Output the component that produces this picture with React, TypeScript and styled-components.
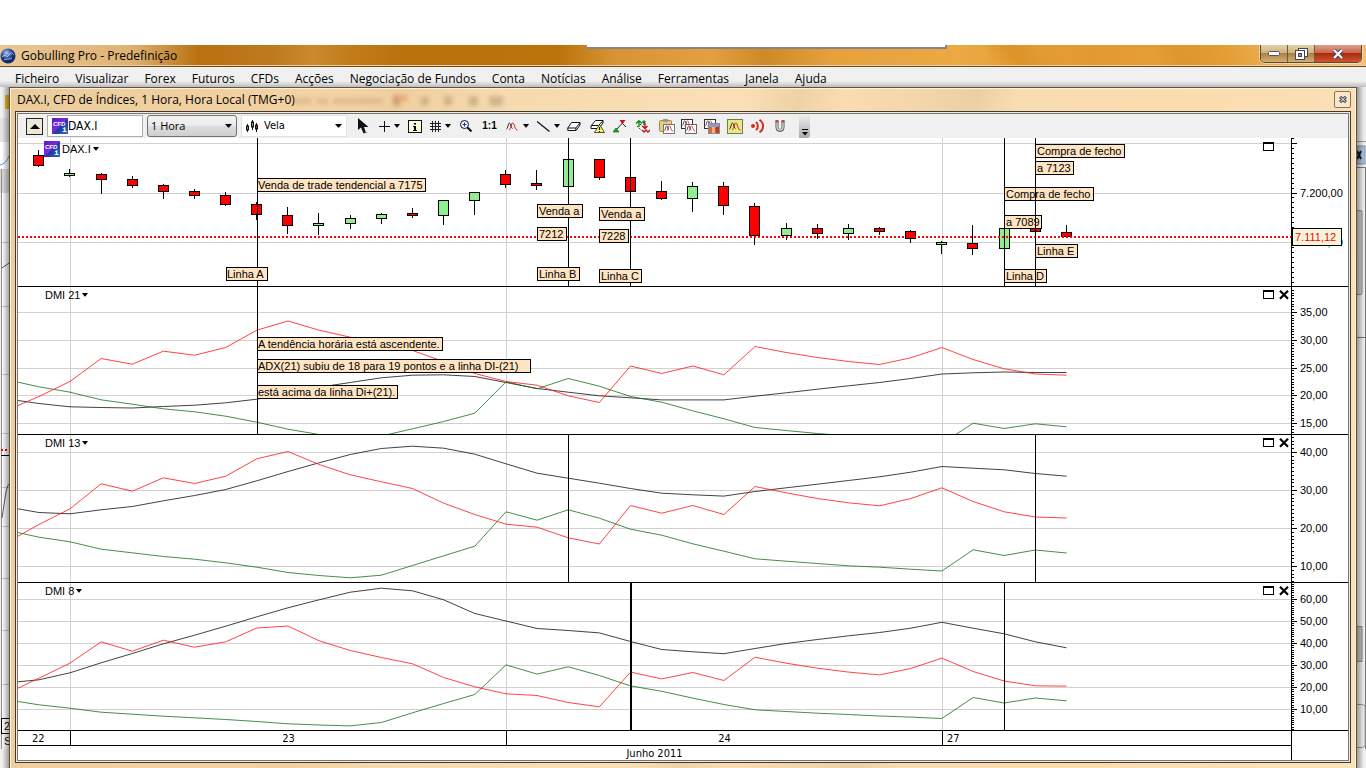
import React from "react";
import styled, { createGlobalStyle, css } from "styled-components";

const ui = `"Open Sans", "Noto Sans", sans-serif`;
const arial = `"Liberation Sans", Arial, sans-serif`;
const tahoma = `"DejaVu Sans Condensed", "DejaVu Sans", sans-serif`;

const GlobalStyle = createGlobalStyle`
  * { box-sizing: border-box; }
  body { margin: 0; background: #fff; overflow: hidden; color: #000; }
  button, input, select { font: inherit; color: inherit; margin: 0; padding: 0; border-radius: 0; }
  svg { display: block; flex: none; }
`;

/* ---------- application shell ---------- */

const Page = styled.div`
  display: flex;
  flex-direction: column;
  min-height: 100vh;
  background: #f0f0f0;
  font: 12px/16px ${ui};
`;

const Desktop = styled.div`
  position: relative;
  height: 45px;
  background: #fff;
`;

const HiddenPanel = styled.div`
  position: absolute;
  left: 43%;
  bottom: -4px;
  width: 360px;
  height: 4px;
  background: #fff;
  border-right: 2px solid #83868c;
  border-bottom: 2px solid #83868c;
  z-index: 2;
`;

const TitleBar = styled.header`
  display: flex;
  align-items: flex-start;
  justify-content: space-between;
  height: 22px;
  border-bottom: 1px solid #6d4c1c;
  box-shadow: inset 0 -1px 0 #f0cf9a;
  background:
    linear-gradient(90deg, rgba(255, 240, 214, 0.6) 0, rgba(255, 236, 204, 0.5) 130px, rgba(255, 230, 190, 0) 200px),
    linear-gradient(60deg, transparent 72%, #dc9328 74%, #e09a30 76%, transparent 78%, transparent 84%, #dc962c 86%, transparent 92%),
    linear-gradient(90deg, #c98a38 0, #b9700f 14%, #bd7a1e 20%, #cb8a2e 23%, #c07a18 26%, #b8720c 30%, #bb740c 41%, #d89434 45%, #e3a040 52%, #cc8a26 56%, #e6a13d 61%, #eba843 70%, #e2992f 80%, #e9a43e 90%, #f0c07a 100%);
`;

const TitleText = styled.h1`
  display: flex;
  align-items: center;
  gap: 5px;
  height: 22px;
  margin: 0;
  font: 12px/22px ${ui};
`;

const WindowButtons = styled.div`
  display: flex;
  height: 18px;
  margin-right: 4px;
  border: 1px solid #5f4a30;
  border-top: 0;
  border-radius: 0 0 5px 5px;
  overflow: hidden;
  box-shadow: 0 0 0 1px rgba(255, 236, 200, 0.6);
`;

const WindowButton = styled.button<{ $close?: boolean }>`
  display: flex;
  align-items: center;
  justify-content: center;
  width: ${(p) => (p.$close ? 46 : 27)}px;
  border: 0;
  border-right: ${(p) => (p.$close ? "0" : "1px solid #6f5a3c")};
  background: ${(p) =>
    p.$close
      ? "linear-gradient(#dea08c 0, #cc6850 45%, #a82c12 50%, #d0522e 100%)"
      : "linear-gradient(#e6cfa6 0, #d2b382 45%, #a9824a 50%, #d4ae72 100%)"};
`;

const MenuBar = styled.nav`
  display: flex;
  gap: 16px;
  height: 20px;
  padding: 0 15px;
  background: linear-gradient(#f0f0f0 70%, #bdbdbd 100%);
`;

const MenuItem = styled.button`
  padding-top: 2px;
  border: 0;
  background: none;
  line-height: 20px;
  white-space: nowrap;
`;

const Workspace = styled.div`
  display: flex;
  flex: 1;
  overflow: hidden;
  height: 681px;
`;

/* ---------- chart window ---------- */

const ChildWindow = styled.section`
  flex: 1;
  min-width: 0;
  display: flex;
  flex-direction: column;
  border: 1px solid #62533f;
  border-bottom: 0;
  padding: 0 5px 5px;
  background: linear-gradient(100deg, #eccb9c 0, #f3d3a4 22%, #f0cf9f 27%, #f6d9ae 33%, #fbdfb6 50%, #eed2a6 54%, #fbdcb0 57%, #ecd0a4 66%, #fadcb2 69%, #fbdcae 80%, #fbe1bc 100%);
  box-shadow: inset 1px 1px 0 #fff0d8, inset -1px 0 0 #fff0d8;
`;

const ChildTitle = styled.div`
  display: flex;
  align-items: center;
  height: 23px;
  padding: 0 0 0 2px;
`;

const ChildName = styled.h2`
  margin: 0;
  font: 12px/22px ${ui};
  white-space: nowrap;
`;

const Ghost = styled.svg`
  margin-left: -8px;
  filter: blur(2px);
  opacity: 0.4;
`;

const ChildClose = styled.button`
  display: flex;
  align-items: center;
  justify-content: center;
  width: 17px;
  height: 17px;
  margin-left: auto;
  border: 1px solid #85735a;
  border-radius: 2px;
  background: #fbe6c8;
`;

const Frame = styled.div`
  border: 1px solid #40382c;
  padding: 1px;
  background: #f6ead6;
`;

const Content = styled.div`
  border: 1px solid #74777a;
  background: #fff;
`;

/* ---------- toolbar ---------- */

const Toolbar = styled.div`
  display: flex;
  align-items: center;
  height: 24px;
  padding-left: 8px;
  background: #f0f0f0;
`;

const CollapseButton = styled.button`
  display: flex;
  align-items: center;
  justify-content: center;
  width: 17px;
  height: 17px;
  margin-right: 4px;
  border: 1px solid #222;
  background: #ece9dc;
`;

const Field = styled.div<{ $w: number; $kind?: "input" | "button" | "flat" }>`
  position: relative;
  display: flex;
  align-items: center;
  width: ${(p) => p.$w}px;
  height: 22px;
  margin-right: 4px;
  padding: 0 4px;
  background: #fff;
  border: 1px solid ${(p) => (p.$kind === "flat" ? "#e1e3ea" : "#abadb3")};
  ${(p) =>
    p.$kind === "button" &&
    css`
      padding: 0 4px 0 3px;
      border-color: #707070;
      border-radius: 3px;
      background: linear-gradient(#f2f2f2 0, #ebebeb 50%, #dddddd 51%, #cfcfcf 100%);
    `}
`;

const SymbolInput = styled.input`
  width: 60px;
  border: 0;
  outline: 0;
  background: none;
  font: 12px/16px ${tahoma};
`;

const Picker = styled.select<{ $font: string; $pad?: number }>`
  flex: 1;
  min-width: 0;
  padding-left: ${(p) => p.$pad ?? 0}px;
  border: 0;
  outline: 0;
  appearance: none;
  background: none;
  font: 11px/16px ${(p) => p.$font};
`;

const Tool = styled.button<{ $w: number }>`
  display: flex;
  align-items: center;
  justify-content: center;
  gap: 4px;
  flex: none;
  width: ${(p) => p.$w}px;
  height: 22px;
  border: 0;
  background: none;
`;

const Ratio = styled.span`
  font: bold 10px/16px ${arial};
`;

const Overflow = styled.button`
  display: flex;
  align-items: flex-end;
  justify-content: center;
  width: 11px;
  height: 24px;
  margin-left: 9px;
  padding-bottom: 2px;
  border: 0;
  border-radius: 0 3px 3px 0;
  background: linear-gradient(#f0f0f0, #a9a9a9);
`;

/* ---------- panes ---------- */

const Pane = styled.section<{ $h: number }>`
  display: flex;
  height: ${(p) => p.$h}px;
  border-bottom: 1px solid #000;
`;

const Plot = styled.div`
  position: relative;
  flex: 1;
  min-width: 0;
  overflow: hidden;
`;

const Scale = styled.div`
  position: relative;
  width: 57px;
  font: 11px/14px ${arial};
`;

const PaneHead = styled.div<{ $first?: boolean }>`
  position: absolute;
  top: ${(p) => (p.$first ? 3 : 0)}px;
  left: ${(p) => (p.$first ? 26 : 27)}px;
  right: ${(p) => (p.$first ? 17 : 2)}px;
  display: flex;
  align-items: center;
  justify-content: space-between;
  height: 16px;
  font: 11px/16px ${arial};
`;

const PaneName = styled.button`
  display: flex;
  align-items: center;
  gap: 2px;
  padding: 0;
  border: 0;
  background: none;
`;

const PaneTools = styled.div<{ $first?: boolean }>`
  display: flex;
  align-self: flex-start;
  gap: 5px;
  padding-top: ${(p) => (p.$first ? 1 : 3)}px;
`;

const PaneTool = styled.button`
  display: flex;
  border: 0;
  background: none;
`;

const Note = styled.span<{ $x: number; $y: number; $w: number; $pad: boolean }>`
  position: absolute;
  left: ${(p) => p.$x}px;
  top: ${(p) => p.$y}px;
  width: ${(p) => p.$w}px;
  height: 14px;
  padding-left: ${(p) => (p.$pad ? 1 : 0)}px;
  border: 1px solid #000;
  background: #ffe4c4;
  font: 11px/12px ${arial};
  white-space: nowrap;
`;

const Marker = styled.span<{ $x: number; $w?: number }>`
  position: absolute;
  left: ${(p) => p.$x}px;
  top: 0;
  bottom: 0;
  width: ${(p) => p.$w ?? 1}px;
  background: #000;
`;

const PriceTag = styled.output`
  position: absolute;
  left: 1px;
  top: 90px;
  width: 50px;
  height: 18px;
  padding-left: 2px;
  border: 1px solid #000;
  background: #f5f5dc;
  color: #f00;
  font: 11px/16px ${arial};
`;

const AxisRow = styled.div`
  display: flex;
  font: 11px/16px ${tahoma};
`;

const Dates = styled.div`
  flex: 1;
  min-width: 0;
`;

const Corner = styled.div`
  width: 57px;
  border-left: 1px solid #000;
`;

const Days = styled.div`
  display: flex;
  height: 15px;
  border-bottom: 1px solid #000;
`;

const Day = styled.div<{ $w?: number; $left?: number }>`
  ${(p) => (p.$w ? css`width: ${p.$w}px; border-right: 1px solid #000;` : css`flex: 1;`)}
  text-align: ${(p) => (p.$left ? "left" : "center")};
  padding-left: ${(p) => p.$left ?? 0}px;
`;

const Month = styled.div`
  height: 14px;
  text-align: center;
`;

/* ---------- data (sheet coordinates) ---------- */

const LEFT = 18;
const xAt = (i: number) => 70 + 31.14 * (i - 1);

// [centre x, body top, body bottom, wick top, wick bottom, rising]
const candles: [number, number, number, number, number, number][] = [
  [38, 155, 166, 150, 167, 0], [69, 173, 176, 169, 177, 1], [101, 174, 180, 173, 194, 0],
  [132, 179, 186, 176, 188, 0], [163, 185, 192, 184, 199, 0], [194, 191, 196, 189, 199, 0],
  [225, 195, 205, 192, 206, 0], [256, 204, 215, 202, 220, 0], [287, 215, 226, 207, 234, 0],
  [318, 223, 226, 213, 235, 1], [350, 218, 224, 215, 229, 1], [381, 214, 219, 213, 224, 1],
  [412, 213, 216, 208, 218, 0], [443, 200, 216, 200, 225, 1], [474, 192, 201, 192, 215, 1],
  [505, 174, 185, 170, 188, 0], [536, 183, 186, 170, 190, 0], [568, 159, 187, 159, 187, 1],
  [599, 159, 178, 159, 180, 0], [630, 177, 192, 177, 192, 0], [661, 191, 199, 181, 200, 0],
  [692, 186, 199, 182, 212, 1], [723, 186, 206, 182, 215, 0], [754, 206, 236, 203, 245, 0],
  [786, 228, 236, 223, 240, 1], [817, 228, 234, 224, 239, 0], [848, 228, 234, 224, 240, 1],
  [879, 228, 232, 227, 235, 0], [910, 231, 239, 230, 243, 0], [941, 242, 245, 241, 254, 1],
  [972, 243, 249, 225, 255, 0], [1004, 228, 249, 228, 249, 1], [1035, 228, 232, 228, 232, 0],
  [1066, 232, 237, 225, 238, 0],
];

type Line = { color: string; start: number; ys: number[] };
type Annotation = [number, number, number, string];
type PaneData = {
  name: string;
  top: number;
  height: number;
  ticks: [number, string][];
  step: number;
  lines: Line[];
  under?: Annotation[];
  markers: [number, number?][];
  notes: Annotation[];
};

const BLACK = "#111";
const RED = "#ff1414";
const GREEN = "#14701c";

const panes: PaneData[] = [
  {
    name: "DAX.I", top: 138, height: 149, step: 4.95,
    ticks: [[143, ""], [193, "7.200,00"], [242, "7.100,00"]],
    lines: [],
    under: [
      [1004, 187, 90, "Compra de fecho"],
      [1004, 215, 38, "a 7089"], [1004, 269, 43, "Linha D"],
    ],
    markers: [[257], [568], [630], [1004], [1035]],
    notes: [
      [257, 178, 169, "Venda de trade tendencial a 7175"], [226, 267, 42, "Linha A"],
      [537, 204, 46, "Venda a"], [537, 227, 30, "7212"], [537, 267, 43, "Linha B"],
      [599, 207, 46, "Venda a"], [599, 229, 30, "7228"], [599, 269, 43, "Linha C"],
      [1035, 144, 90, "Compra de fecho"], [1035, 161, 39, "a 7123"], [1035, 244, 43, "Linha E"],
    ],
  },
  {
    name: "DMI 21", top: 287, height: 148, step: 2.78,
    ticks: [[312, "35,00"], [340, "30,00"], [368, "25,00"], [395, "20,00"], [423, "15,00"]],
    lines: [
      { color: BLACK, start: 400, ys: [403, 406.3, 407, 407.5, 406, 404.7, 402.3, 398.7, 392.7, 386.7, 382, 377.3, 374.7, 374.3, 376, 382, 388, 391.7, 395.3, 397.3, 399.4, 399.4, 399.4, 395.7, 392.3, 388.7, 385.3, 382, 378, 373.5, 372.3, 371.5, 372, 372] },
      { color: GREEN, start: 381.7, ys: [386.3, 391.7, 399.3, 403.7, 408.3, 411.3, 415.7, 421.7, 428.7, 434, 436.5, 435.5, 428.3, 421, 412.7, 381.3, 388.3, 378, 385.7, 396, 401.7, 410.3, 418.3, 427, 430, 433, 435.5, 438, 441, 443, 422.7, 428, 423.3, 426.3] },
      { color: RED, start: 405, ys: [396, 381, 358, 363.7, 350.7, 354.7, 347, 329.7, 320.5, 329.7, 336.7, 342.3, 350, 361, 373, 381, 384.7, 395.3, 402, 365.5, 373, 365.5, 374.3, 346, 352, 357, 361, 364, 357.3, 347, 359, 368.3, 373.5, 374.7] },
    ],
    markers: [[257]],
    notes: [
      [257, 337, 186, "A tendência horária está ascendente."],
      [257, 359, 274, "ADX(21) subiu de 18 para 19 pontos e a linha DI-(21)"],
      [257, 385, 141, "está acima da linha Di+(21)."],
    ],
  },
  {
    name: "DMI 13", top: 435, height: 148, step: 3.8,
    ticks: [[452, "40,00"], [490, "30,00"], [528, "20,00"], [566, "10,00"]],
    lines: [
      { color: BLACK, start: 508.3, ys: [512, 513.3, 509.3, 506, 500.3, 495, 489, 480.3, 471, 462.3, 454, 448, 445.7, 447.7, 453.7, 463.3, 472.7, 477.7, 482.7, 488, 492.7, 494.3, 495.6, 491, 487.3, 483.7, 480, 476.3, 471.7, 466, 467.7, 469.3, 473, 475.7] },
      { color: GREEN, start: 532, ys: [536.7, 541.3, 548.7, 552.3, 556, 558.7, 562.3, 566.7, 572, 575, 577.3, 574.7, 565, 555.3, 545.7, 511.3, 519.7, 509.3, 517.7, 528.7, 534.7, 543.3, 550.7, 558.3, 560.7, 563, 565.3, 566.7, 568.7, 570.5, 549.3, 555, 549.5, 552.5] },
      { color: RED, start: 535.7, ys: [524, 508.3, 483.3, 490.7, 477.3, 483, 475.7, 458.3, 451, 464, 474.3, 481.3, 488, 502.7, 514, 523.7, 526.7, 537.3, 543.5, 505, 512.7, 505, 514, 486, 492.3, 498, 502.3, 505.3, 498, 487.3, 501, 511.3, 516.5, 517.5] },
    ],
    markers: [[568], [1035]],
    notes: [],
  },
  {
    name: "DMI 8", top: 583, height: 148, step: 2.2,
    ticks: [[599, "60,00"], [621, "50,00"], [643, "40,00"], [665, "30,00"], [687, "20,00"], [709, "10,00"]],
    lines: [
      { color: BLACK, start: 681.3, ys: [679.3, 672.3, 662.3, 653, 643.3, 634.7, 625.7, 616.3, 607.3, 599.3, 591.7, 587.7, 590.3, 599.3, 613, 620.5, 628, 630, 632.4, 641, 649, 651.3, 653.2, 648, 643, 639, 635.3, 632, 627.7, 621.8, 627.7, 633.3, 641.3, 647.3] },
      { color: GREEN, start: 701, ys: [704.3, 707.7, 711.7, 713.7, 715.7, 717.3, 719, 721, 723.3, 724.5, 725.4, 722, 712.3, 703, 694, 664.4, 673.6, 666.3, 675, 685.4, 690.8, 697.6, 704, 709.3, 711, 712.7, 714, 715.5, 716.6, 718, 697, 702.5, 697.5, 700.3] },
      { color: RED, start: 687.7, ys: [677.7, 662.7, 641.3, 650.7, 639.7, 646.7, 641.3, 627.5, 625.5, 640.3, 650, 657, 663.3, 677, 686.3, 693.3, 695, 702, 706.3, 671.6, 678.4, 672, 680, 656.7, 662.7, 667.7, 671.6, 674.4, 668, 657.6, 671, 680.5, 685.3, 685.6] },
    ],
    markers: [[630, 2], [1004]],
    notes: [],
  },
];

/* ---------- small drawings ---------- */

const Caret = ({ w = 6 }: { w?: number }) => (
  <svg width={w} height="4" viewBox="0 0 6 4" preserveAspectRatio="none" aria-hidden="true">
    <path d="M0 0h6L3.4 3.5h-.8z" />
  </svg>
);

const CfdIcon = () => (
  <svg width="16" height="16" aria-hidden="true">
    <defs>
      <linearGradient id="cfd" x1="0" y1="0" x2="1" y2="1">
        <stop offset="0" stopColor="#5a1cc0" />
        <stop offset="0.48" stopColor="#7a2be0" />
        <stop offset="0.54" stopColor="#1c3a9c" />
        <stop offset="1" stopColor="#2a6fd0" />
      </linearGradient>
    </defs>
    <rect width="16" height="16" fill="url(#cfd)" />
    <text x="1" y="8" fontFamily="Liberation Sans" fontSize="6" fontWeight="700" fontStyle="italic" fill="#fff">CFD</text>
    <text x="10" y="14" fontFamily="Liberation Mono" fontSize="8" fontWeight="700" fill="#fff">i</text>
  </svg>
);

const Wave = ({ x = 0, y = 0 }: { x?: number; y?: number }) => (
  <g transform={`translate(${x} ${y})`} fill="none" strokeWidth="1">
    <path d="M.5 7C2 6.500 2 1 3.500 1S5 6.500 6.500 6.500" stroke="#222" />
    <path d="M3 8C5 7.500 5 1 6.800 1S8.500 8 11.500 8" stroke="#d81818" />
  </g>
);

const icons: Record<string, React.ReactElement> = {
  cursor: (
    <svg width="12" height="16"><path d="M1 0v12l3-2.500L6.500 15.500l2.500-1L7 9h4.500z" fill="#111" /><path d="M8 13l2 2" stroke="#888" /></svg>
  ),
  cross: <svg width="11" height="11"><path d="M5.500 0v11M0 5.500h11" stroke="#111" /></svg>,
  info: (
    <svg width="14" height="13"><rect x=".5" y=".5" width="13" height="12" fill="#fdfde0" stroke="#111" /><path d="M6 3h2v1.500H6zM5 6h3v4h1v1H5v-1h1V7H5z" /></svg>
  ),
  grid: <svg width="11" height="11"><path d="M2.500 0v11M5.500 0v11M8.500 0v11M0 2.500h11M0 5.500h11M0 8.500h11" stroke="#222" shapeRendering="crispEdges" /></svg>,
  zoom: (
    <svg width="12" height="12"><circle cx="4.500" cy="4.500" r="4" fill="#f4f8ff" stroke="#111" /><path d="M4.500 2.500v4M2.500 4.500h4" stroke="#1830c8" /><path d="M7.500 7.500l4 4" stroke="#111" strokeWidth="2" /></svg>
  ),
  wave: <svg width="13" height="10"><Wave y={1} /></svg>,
  line: <svg width="13" height="11"><path d="M0 .5L12.500 10.500" stroke="#111" strokeWidth="1.300" /></svg>,
  eraser: (
    <svg width="14" height="9"><path d="M4.500 .5h8.500v2.500L9 8.500H.8V6z" fill="#fff" stroke="#111" /><path d="M.8 6h8L13 .8M8.800 6v2.500" fill="none" stroke="#111" /></svg>
  ),
  eraserWarn: (
    <svg width="15" height="13"><path d="M5.500 .5H13v2.500L9 8.500H1V6zM1 5.500h7.500L13 .8" fill="#fff" stroke="#111" /><path d="M9.500 4.500l5 8h-10z" fill="#ffff58" stroke="#222" strokeWidth=".8" /><path d="M9.500 7v3M9.500 11v1" stroke="#111" strokeWidth="1.200" /></svg>
  ),
  swing: (
    <svg width="14" height="13"><path d="M3 10L9.500 3M8.500 2.500L13 7" stroke="#222" fill="none" /><path d="M6.500 0h6L9.500 4z" fill="#d80c0c" /><path d="M0 12h6L3 8z" fill="#18a818" stroke="#0a5c0a" strokeWidth=".6" /></svg>
  ),
  trades: (
    <svg width="14" height="13" fill="none">
      <path d="M3 7V1M0 3.500L3 .8 6 3.500M8 5V1.500M6.500 2.500L8 1l1.500 1.500" stroke="#118811" strokeWidth="1.400" />
      <path d="M9 3v5M6.500 6L9 8.500 11.500 6M6 10l2 2 2-2 2 2 2-2" stroke="#c01818" strokeWidth="1.400" />
      <path d="M1 6l4 4M4 4l3 3" stroke="#333" strokeDasharray="1.500 1" />
    </svg>
  ),
  paste: (
    <svg width="16" height="15"><rect x=".5" y="1.500" width="12" height="11" rx="1" fill="#e8cc80" stroke="#a8873c" /><rect x="4" y="0" width="5" height="3" fill="#999" /><rect x="4.500" y="5.500" width="11" height="9" fill="#fff" stroke="#777" /><g transform="translate(5 6) scale(.8)"><Wave /></g></svg>
  ),
  copy: (
    <svg width="16" height="15"><rect x=".5" y=".5" width="11" height="9" fill="#fff" stroke="#333" /><g transform="translate(1 1) scale(.8)"><Wave /></g><rect x="4.500" y="5.500" width="11" height="9" fill="#fff" stroke="#666" /><g transform="translate(5 6) scale(.8)"><Wave /></g></svg>
  ),
  image: (
    <svg width="16" height="15"><rect x=".5" y=".5" width="11" height="9" fill="#fff" stroke="#333" /><g transform="translate(1 1) scale(.8)"><Wave /></g><rect x="4.500" y="4.500" width="11" height="10" fill="#e06830" stroke="#7a8ca8" /><path d="M5 5h10v3H5z" fill="#88a0c8" /><path d="M8 8h3v6H8z" fill="#ffb070" /><path d="M11 9l4-2v7h-3z" fill="#c83c1c" /></svg>
  ),
  active: <svg width="16" height="15"><rect x=".5" y=".5" width="15" height="14" fill="#e4ea86" stroke="#77794c" /><Wave x={2} y={3} /></svg>,
  sound: (
    <svg width="14" height="14" fill="none" stroke="#d02c24" strokeWidth="2"><circle cx="2" cy="7" r="2" fill="#d02c24" stroke="none" /><path d="M5 3c2.500 2 2.500 6 0 8" /><path d="M8.500 .8c4.800 3 4.800 9.500 0 12.500" /></svg>
  ),
  magnet: (
    <svg width="10" height="12"><path d="M2 1v6c0 4.500 6 4.500 6 0V1" fill="none" stroke="#555" strokeWidth="3" /><path d="M2 2v5c0 4 6 4 6 0V2" fill="none" stroke="#d4d4d4" strokeWidth="1.400" /><path d="M.5 0h3v2.500h-3zM6.500 0h3v2.500h-3z" fill="#b84a40" /></svg>
  ),
};

const tools: [string, string, number, boolean?][] = [
  ["cursor", "Cursor", 23], ["cross", "Mira", 31, true], ["info", "Informação", 20],
  ["grid", "Grelha", 31, true], ["zoom", "Ampliar", 20], ["ratio", "1:1", 27],
  ["wave", "Indicadores", 29, true], ["line", "Linhas", 32, true], ["eraser", "Apagar", 19],
  ["eraserWarn", "Apagar tudo", 28], ["swing", "Tendência", 18], ["trades", "Transacções", 27],
  ["paste", "Colar", 21], ["copy", "Copiar", 24], ["image", "Imagem", 22],
  ["active", "Gráfico", 23], ["sound", "Alerta", 24], ["magnet", "Íman", 20],
];

const menu = ["Ficheiro", "Visualizar", "Forex", "Futuros", "CFDs", "Acções", "Negociação de Fundos", "Conta", "Notícias", "Análise", "Ferramentas", "Janela", "Ajuda"];

const LeftEdge = () => (
  <svg width="9" height="681" aria-hidden="true">
    <defs>
      <linearGradient id="shadeL"><stop offset="0" stopColor="#000" stopOpacity="0" /><stop offset="1" stopColor="#000" stopOpacity=".35" /></linearGradient>
    </defs>
    <rect width="9" height="681" fill="#f0f0f0" />
    <path d="M5 8h4v14H5z" fill="#e8b820" />
    <rect y="31" width="9" height="24" fill="#e4e4e4" />
    <rect y="55" width="9" height="27" fill="#fff" />
    <path d="M0 78q6-1 9-9" fill="none" stroke="#4c9ce0" />
    <rect y="82" width="9" height="24" fill="#dcdcdc" />
    <rect x="2" y="106" width="7" height="556" fill="#fff" />
    <path d="M1.500 82v580" stroke="#8c8c8c" />
    <path d="M2 155.500h7M2 219.500h7M2 287.500h7M2 346.500h7M2 400.500h7M2 439.500h7M2 491.500h7M2 543.500h7M2 597.500h7" stroke="#ccc" />
    <path d="M2 181l7-5M2 431l4-26q2-8 3-8" stroke="#555" fill="none" />
    <path d="M1 363h8" stroke="#f00" strokeWidth="2" strokeDasharray="2 2" />
    <path d="M1 368.500h8M1 631.500h8M1 646.500h8M1.500 631v16" stroke="#000" />
    <text x="4" y="643" fontFamily="Liberation Sans" fontSize="11">2</text>
    <text x="4" y="658" fontFamily="Liberation Sans" fontSize="11">S</text>
    <rect x="2" width="7" height="681" fill="url(#shadeL)" />
  </svg>
);

const RightEdge = () => (
  <svg width="9" height="681" aria-hidden="true">
    <defs>
      <linearGradient id="shadeR"><stop offset="0" stopColor="#000" stopOpacity=".35" /><stop offset="1" stopColor="#000" stopOpacity="0" /></linearGradient>
    </defs>
    <rect width="9" height="681" fill="#ececec" />
    <path d="M0 54.500h9" stroke="#999" />
    <rect y="59" width="8" height="18" fill="#a8bede" stroke="#8090a8" />
    <path d="M0 64l4 8M4 64l-4 8" stroke="#111" strokeWidth="2" />
    <path d="M8.500 80v582M0 80.500h9" stroke="#777" />
    <path d="M0 123.500h4q1 0 1 2v80q0 2-1 2H0" fill="#ccc" stroke="#888" />
    <path d="M0 250.500h8" stroke="#777" />
    <path d="M0 539.500h5v35H0" fill="#c4c4c4" stroke="#888" />
    <path d="M0 617.500h5q3 0 3 3v37q0 3-3 3H0" fill="#eee" stroke="#999" />
    <rect y="662" width="9" height="19" fill="#f0f0f0" />
    <rect width="7" height="681" fill="url(#shadeR)" />
  </svg>
);

/* ---------- pane drawing ---------- */

function PlotDrawing({ pane }: { pane: PaneData }) {
  const main = pane.top === 138;
  return (
    <svg width="100%" height={pane.height - 1} role="img" aria-label={pane.name}>
      <g shapeRendering="crispEdges">
        {pane.ticks.map(([y]) => (
          <line key={y} x1="0" x2="100%" y1={y - pane.top + 0.5} y2={y - pane.top + 0.5} stroke="#d0d0d0" />
        ))}
        {[70, 506, 942].map((x) => (
          <line key={x} x1={x - LEFT + 0.5} x2={x - LEFT + 0.5} y1="0" y2="100%" stroke="#d0d0d0" />
        ))}
      </g>
      <g transform={`translate(${-LEFT} ${-pane.top})`}>
        {main &&
          candles.map(([x, t, b, wt, wb, up]) => (
            <g key={x} shapeRendering="crispEdges" stroke="#000">
              <line x1={x + 0.5} x2={x + 0.5} y1={wt} y2={wb} />
              <rect x={x - 4.5} y={t + 0.5} width="10" height={b - t - 1} fill={up ? "#90ee90" : "#f00"} />
            </g>
          ))}
        {pane.lines.map((l) => (
          <polyline
            key={l.color}
            fill="none"
            stroke={l.color}
            strokeWidth="0.800"
            points={[`18,${l.start + 0.5}`, ...l.ys.map((y, i) => `${xAt(i).toFixed(1)},${y + 0.5}`)].join(" ")}
          />
        ))}
      </g>
      {main && <line x1="0" x2="100%" y1="99" y2="99" stroke="#f00" strokeWidth="2" strokeDasharray="2 2" shapeRendering="crispEdges" />}
    </svg>
  );
}

function ScaleDrawing({ pane }: { pane: PaneData }) {
  const h = pane.height - 1;
  const base = pane.ticks[0][0] - pane.top;
  const minor: number[] = [];
  for (let y = base % pane.step; y < h; y += pane.step) minor.push(Math.round(y));
  return (
    <svg width="57" height={h} aria-hidden="true">
      <g shapeRendering="crispEdges" stroke="#000">
        <line x1=".5" x2=".5" y1="0" y2={h} />
        {minor.map((y) => <line key={y} x1="1" x2="3" y1={y + 0.5} y2={y + 0.5} />)}
        {pane.ticks.map(([y]) => <line key={y} x1="1" x2="6" y1={y - pane.top + 0.5} y2={y - pane.top + 0.5} />)}
      </g>
      {pane.ticks.map(([y, t]) => (
        <text key={y} x="9" y={y - pane.top + 4} fontFamily="Liberation Sans" fontSize="11">{t}</text>
      ))}
    </svg>
  );
}

function ChartPane({ pane }: { pane: PaneData }) {
  const main = pane.top === 138;
  const note = ([x, y, w, t]: Annotation) => (
    <Note key={`${x}-${y}`} $x={x - LEFT} $y={y - pane.top} $w={w} $pad={x > 300}>{t}</Note>
  );
  return (
    <Pane $h={pane.height}>
      <Plot>
        <PlotDrawing pane={pane} />
        {pane.markers.map(([x, w]) => x !== 1035 && <Marker key={x} $x={x - LEFT} $w={w} />)}
        {pane.under?.map(note)}
        {pane.markers.map(([x, w]) => x === 1035 && <Marker key={x} $x={x - LEFT} $w={w} />)}
        {pane.notes.map(note)}
        <PaneHead $first={main}>
          <PaneName>
            {main && <CfdIcon />}
            {pane.name}
            <Caret />
          </PaneName>
          <PaneTools $first={main}>
            <PaneTool aria-label="Maximizar">
              <svg width="11" height="10" shapeRendering="crispEdges"><path d="M0 0h11v9H0zM1 2v6h9V2z" fillRule="evenodd" /></svg>
            </PaneTool>
            {!main && (
              <PaneTool aria-label="Fechar">
                <svg width="10" height="10"><path d="M1 .8l8 8M9 .8l-8 8" stroke="#000" strokeWidth="2.200" /></svg>
              </PaneTool>
            )}
          </PaneTools>
        </PaneHead>
      </Plot>
      <Scale>
        <ScaleDrawing pane={pane} />
        {main && <PriceTag>7.111,12</PriceTag>}
      </Scale>
    </Pane>
  );
}

export default function App() {
  return (
    <Page>
      <GlobalStyle />
      <Desktop><HiddenPanel /></Desktop>
      <TitleBar>
        <TitleText>
          <svg width="16" height="16" aria-hidden="true">
            <defs><radialGradient id="globe" cx=".4" cy=".3"><stop offset="0" stopColor="#b8ccf0" /><stop offset=".55" stopColor="#3a62ac" /><stop offset="1" stopColor="#122c6c" /></radialGradient></defs>
            <circle cx="8" cy="8" r="7.500" fill="url(#globe)" />
            <path d="M2 9c3-4 5 2 7-2s4-1 5 0M4 12c3-2 5 0 8-2" stroke="#dce8ff" fill="none" opacity=".7" />
          </svg>
          Gobulling Pro - Predefinição
        </TitleText>
        <WindowButtons>
          <WindowButton aria-label="Minimizar">
            <svg width="12" height="5"><rect x=".5" y=".5" width="11" height="4" rx="1" fill="#fff" stroke="#555" /></svg>
          </WindowButton>
          <WindowButton aria-label="Restaurar">
            <svg width="13" height="12"><rect x="3.500" y=".5" width="9" height="8" fill="#fff" stroke="#445" /><rect x=".5" y="2.500" width="9" height="9" fill="#fff" stroke="#445" /><rect x="3.500" y="5.500" width="3" height="3" fill="#b89868" stroke="#445" /></svg>
          </WindowButton>
          <WindowButton $close aria-label="Sair">
            <svg width="12" height="10"><path d="M2 1l8 8M10 1L2 9" stroke="#445" strokeWidth="4" /><path d="M2 1l8 8M10 1L2 9" stroke="#fff" strokeWidth="2.200" /></svg>
          </WindowButton>
        </WindowButtons>
      </TitleBar>
      <MenuBar>{menu.map((m) => <MenuItem key={m}>{m}</MenuItem>)}</MenuBar>
      <Workspace>
        <LeftEdge />
        <ChildWindow>
          <ChildTitle>
            <ChildName>DAX.I, CFD de Índices, 1 Hora, Hora Local (TMG+0)</ChildName>
            <Ghost width="230" height="20" aria-hidden="true">
              <path d="M8 11h16M30 11h12M46 11h50" stroke="#8a6c44" strokeWidth="5" strokeDasharray="5 1" opacity=".7" />
              <rect x="106" y="5" width="7" height="6" fill="#c84020" /><rect x="114" y="5" width="6" height="6" fill="#c87030" /><rect x="106" y="11" width="7" height="5" fill="#806040" />
              <path d="M134 7h8v8h-8zM157 6h8v9h-8zM182 6h9v10h-9zM202 6h14v10h-14z" fill="#98805c" />
            </Ghost>
            <ChildClose aria-label="Fechar gráfico">
              <svg width="8" height="7"><path d="M1 .8l6 5.400M7 .8L1 6.200" stroke="#444c5c" strokeWidth="3" /><path d="M1.500 1.200l5 4.600M6.500 1.200l-5 4.600" stroke="#fff" strokeWidth="1" /></svg>
            </ChildClose>
          </ChildTitle>
          <Frame>
            <Content>
              <Toolbar>
                <CollapseButton aria-label="Recolher"><svg width="10" height="5"><path d="M0 5h10L5 0z" /></svg></CollapseButton>
                <Field $w={96} $kind="input">
                  <CfdIcon />
                  <SymbolInput aria-label="Símbolo" defaultValue="DAX.I" />
                </Field>
                <Field $w={90} $kind="button">
                  <Picker $font={ui} aria-label="Período" defaultValue="1 Hora"><option>1 Hora</option></Picker>
                  <Caret w={7} />
                </Field>
                <Field $w={106} $kind="flat">
                  <svg width="13" height="13" aria-hidden="true"><path d="M1.500 4v8M6.500 0v10M10.500 3v9" stroke="#111" /><rect x=".5" y="6" width="2" height="4" fill="#50c050" stroke="#111" /><rect x="5.500" y="2" width="2" height="5" fill="#50c050" stroke="#111" /><rect x="9.500" y="5" width="2" height="4" fill="#d02020" stroke="#111" /></svg>
                  <Picker $font={tahoma} $pad={5} aria-label="Tipo de gráfico" defaultValue="Vela"><option>Vela</option></Picker>
                  <Caret w={7} />
                </Field>
                {tools.map(([id, label, w, drop]) => (
                  <Tool key={id} $w={w} aria-label={label}>
                    {id === "ratio" ? <Ratio>1:1</Ratio> : icons[id]}
                    {drop && <Caret />}
                  </Tool>
                ))}
                <Overflow aria-label="Mais"><svg width="6" height="7"><path d="M0 0h6v1H0zM0 3h6L3 6.500z" /></svg></Overflow>
              </Toolbar>
              {panes.map((p) => <ChartPane key={p.name} pane={p} />)}
              <AxisRow>
                <Dates>
                  <Days>
                    <Day $w={53} $left={14}>22</Day>
                    <Day $w={436}>23</Day>
                    <Day $w={436}>24</Day>
                    <Day $left={4}>27</Day>
                  </Days>
                  <Month>Junho 2011</Month>
                </Dates>
                <Corner />
              </AxisRow>
            </Content>
          </Frame>
        </ChildWindow>
        <RightEdge />
      </Workspace>
    </Page>
  );
}
